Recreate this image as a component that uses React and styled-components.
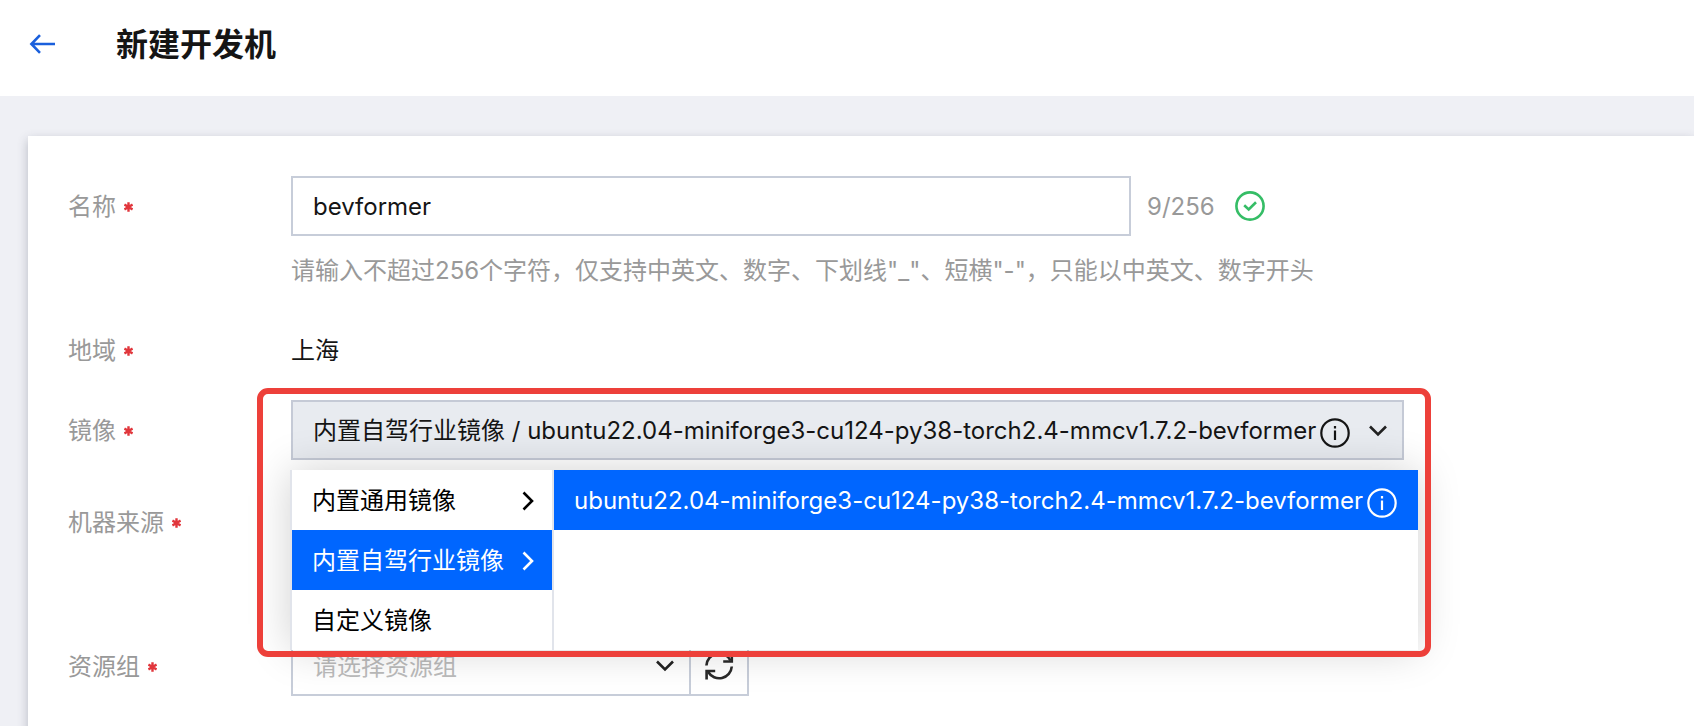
import React, { useState } from "react";
import styled, { createGlobalStyle } from "styled-components";

const GlobalStyle = createGlobalStyle`
  *, *::before, *::after { box-sizing: border-box; }
  body {
    margin: 0;
    background: #eff0f5;
    color: #151515;
    font-family: Inter, "Noto Sans CJK SC", sans-serif;
    font-size: 24px;
    line-height: 36px;
  }
  button, input, select { font: inherit; color: inherit; margin: 0; border-radius: 0; }
  button { cursor: pointer; }
`;

const Page = styled.div`
  min-height: 100vh;
  display: flex;
  flex-direction: column;
`;

const Header = styled.header`
  display: flex;
  align-items: center;
  gap: 60px;
  height: 96px;
  padding: 0 28px 8px;
  background: #fff;
`;

const BackLink = styled.a`
  display: flex;
  color: #1a5fdc;
`;

const Title = styled.h1`
  margin: 0;
  padding-top: 2px;
  font-size: 32px;
  line-height: 48px;
  font-weight: 700;
`;

const Card = styled.main`
  flex: 1;
  margin: 40px 0 0 28px;
  padding: 40px;
  background: #fff;
  box-shadow: 0 4px 10px rgba(54, 58, 80, 0.3);
`;

const Form = styled.form`
  display: flex;
  flex-direction: column;
  gap: 20px;
`;

const Row = styled.div`
  display: grid;
  grid-template-columns: 223px minmax(0, 1fr);
  min-height: ${(p) => p.$minHeight || 60}px;
  padding-top: ${(p) => p.$offset || 0}px;
`;

const Label = styled.label`
  display: flex;
  align-items: center;
  gap: 8px;
  height: 60px;
  padding-top: 2px;
  color: #999;
`;

const Required = styled.svg`
  color: #e1363c;
`;

const Line = styled.div`
  display: flex;
  align-items: center;
`;

const NameInput = styled.input`
  width: 840px;
  max-width: 100%;
  height: 60px;
  padding: 0 20px;
  border: 2px solid #c7cdd9;
  background: #fff;
  outline: none;
`;

const Counter = styled.span`
  margin: 0 20px 0 16px;
  padding-top: 2px;
  color: #999;
`;

const Help = styled.p`
  margin: 17px 0 11px;
  color: #999;
`;

const Value = styled.output`
  padding-top: 1px;
  line-height: 60px;
  height: 60px;
`;

const Cascader = styled.div`
  position: relative;
  width: 1113px;
`;

const CascaderButton = styled.button`
  display: flex;
  align-items: center;
  width: 100%;
  height: 60px;
  padding: 2px 14px 0 20px;
  border: 2px solid #c5cad6;
  background: #e8ebf0;
  white-space: nowrap;
`;

const InfoSlot = styled.span`
  display: flex;
  margin: 4px auto 0 4px;
`;

const Menu = styled.div`
  position: absolute;
  z-index: 2;
  top: 70px;
  left: -1px;
  display: flex;
  width: 1128px;
  background: #fff;
  box-shadow: 0 0 40px rgba(0, 0, 0, 0.18);
`;

const MenuColumn = styled.div`
  flex: ${(p) => (p.$grow ? "1" : "0 0 auto")};
  width: ${(p) => (p.$grow ? "auto" : "264px")};
  border: solid #e1e4eb;
  border-width: ${(p) => (p.$grow ? "0" : "0 2px")};
`;

const MenuItem = styled.button`
  display: flex;
  align-items: center;
  justify-content: ${(p) => (p.$leaf ? "flex-start" : "space-between")};
  width: 100%;
  height: 60px;
  padding: 2px 16px 0 20px;
  border: 0;
  background: ${(p) => (p.$active ? "#0066ff" : "#fff")};
  color: ${(p) => (p.$active ? "#fff" : "#000")};
  white-space: nowrap;
`;

const Highlight = styled.div`
  position: absolute;
  z-index: 3;
  top: -12px;
  left: -34px;
  right: -27px;
  height: 269px;
  border: 6px solid #ed403a;
  border-radius: 11px;
  pointer-events: none;
`;

const SelectBox = styled.div`
  display: grid;
  align-items: center;
  width: 400px;

  > * { grid-area: 1 / 1; }
  > svg { justify-self: end; margin-right: 16px; pointer-events: none; }
`;

const Select = styled.select`
  width: 100%;
  height: 60px;
  padding: 2px 56px 0 20px;
  border: 2px solid #c7cdd9;
  background: #fff;
  color: #bbb;
  appearance: none;
  outline: none;
`;

const RefreshButton = styled.button`
  display: flex;
  align-items: center;
  justify-content: center;
  width: 60px;
  height: 60px;
  margin-left: -2px;
  padding: 0;
  border: 2px solid #c7cdd9;
  background: #fff;
`;

function Star() {
  return (
    <Required width="9" height="10" viewBox="0 0 9 10" stroke="currentColor" strokeWidth="2.4" aria-hidden="true">
      <path d="M4.5.3v9.4M.4 2.6l8.2 4.8M8.6 2.6.4 7.4" />
    </Required>
  );
}

function BackIcon() {
  return (
    <svg width="28" height="20" viewBox="0 0 28 20" fill="none" stroke="currentColor" strokeWidth="2.6">
      <path d="M27 10H3.5M12 1.2 3.4 10l8.6 8.8" />
    </svg>
  );
}

function CheckIcon() {
  return (
    <svg width="30" height="30" viewBox="0 0 30 30" fill="none" stroke="#35bd66" strokeWidth="2.6">
      <circle cx="15" cy="15" r="13.6" />
      <path d="m9.2 14.3 4.5 4.2 7.3-7.2" />
    </svg>
  );
}

function InfoIcon() {
  return (
    <svg width="30" height="30" viewBox="0 0 30 30" fill="none" stroke="currentColor" strokeWidth="2.2">
      <circle cx="15" cy="15" r="13.7" />
      <path d="M15 12.5V22M15 8v2.6" />
    </svg>
  );
}

function ChevronDown() {
  return (
    <svg width="20" height="12" viewBox="0 0 20 12" fill="none" stroke="#222" strokeWidth="2.6">
      <path d="m2 1.5 8 8 8-8" />
    </svg>
  );
}

function ChevronRight() {
  return (
    <svg width="16" height="20" viewBox="0 0 16 20" fill="none" stroke="currentColor" strokeWidth="2.6">
      <path d="m3.5 1.5 8.5 8.5-8.5 8.5" />
    </svg>
  );
}

function RefreshIcon() {
  return (
    <svg width="30" height="30" viewBox="0 0 30 30" fill="none" stroke="#2a2a2a" strokeWidth="2.6">
      <path d="M2.4 14.5A12.7 12.7 0 0 1 26.5 9.5M27.8 15.5A12.7 12.7 0 0 1 4.2 21" />
      <path d="M27.8 2v8.5h-8.6M2.6 28.5V20h8.6" />
    </svg>
  );
}

const IMAGE = "ubuntu22.04-miniforge3-cu124-py38-torch2.4-mmcv1.7.2-bevformer";
const GROUPS = ["内置通用镜像", "内置自驾行业镜像", "自定义镜像"];

export default function App() {
  const [name, setName] = useState("bevformer");
  const [active, setActive] = useState(1);

  return (
    <Page>
      <GlobalStyle />
      <Header>
        <BackLink href="#" aria-label="返回"><BackIcon /></BackLink>
        <Title>新建开发机</Title>
      </Header>
      <Card>
        <Form>
          <Row>
            <Label htmlFor="name">名称<Star /></Label>
            <div>
              <Line>
                <NameInput id="name" value={name} onChange={(e) => setName(e.target.value)} />
                <Counter>{name.length}/256</Counter>
                <CheckIcon />
              </Line>
              <Help>请输入不超过256个字符，仅支持中英文、数字、下划线"_"、短横"-"，只能以中英文、数字开头</Help>
            </div>
          </Row>
          <Row>
            <Label htmlFor="region">地域<Star /></Label>
            <Value id="region">上海</Value>
          </Row>
          <Row>
            <Label htmlFor="image">镜像<Star /></Label>
            <Cascader>
              <CascaderButton id="image" type="button" aria-haspopup="menu" aria-expanded="true">
                内置自驾行业镜像 / {IMAGE}
                <InfoSlot><InfoIcon /></InfoSlot>
                <ChevronDown />
              </CascaderButton>
              <Menu role="menu">
                <MenuColumn>
                  {GROUPS.map((group, i) => (
                    <MenuItem key={group} type="button" role="menuitem" $active={i === active} onClick={() => setActive(i)}>
                      {group}
                      {i < 2 && <ChevronRight />}
                    </MenuItem>
                  ))}
                </MenuColumn>
                <MenuColumn $grow>
                  {active === 1 && (
                    <MenuItem type="button" role="menuitem" $active $leaf>
                      {IMAGE}
                      <InfoSlot><InfoIcon /></InfoSlot>
                    </MenuItem>
                  )}
                </MenuColumn>
              </Menu>
              <Highlight />
            </Cascader>
          </Row>
          <Row $minHeight={136} $offset={12}>
            <Label as="span">机器来源<Star /></Label>
          </Row>
          <Row>
            <Label htmlFor="group">资源组<Star /></Label>
            <Line>
              <SelectBox>
                <Select id="group" defaultValue="">
                  <option value="">请选择资源组</option>
                </Select>
                <ChevronDown />
              </SelectBox>
              <RefreshButton type="button" aria-label="刷新"><RefreshIcon /></RefreshButton>
            </Line>
          </Row>
        </Form>
      </Card>
    </Page>
  );
}
